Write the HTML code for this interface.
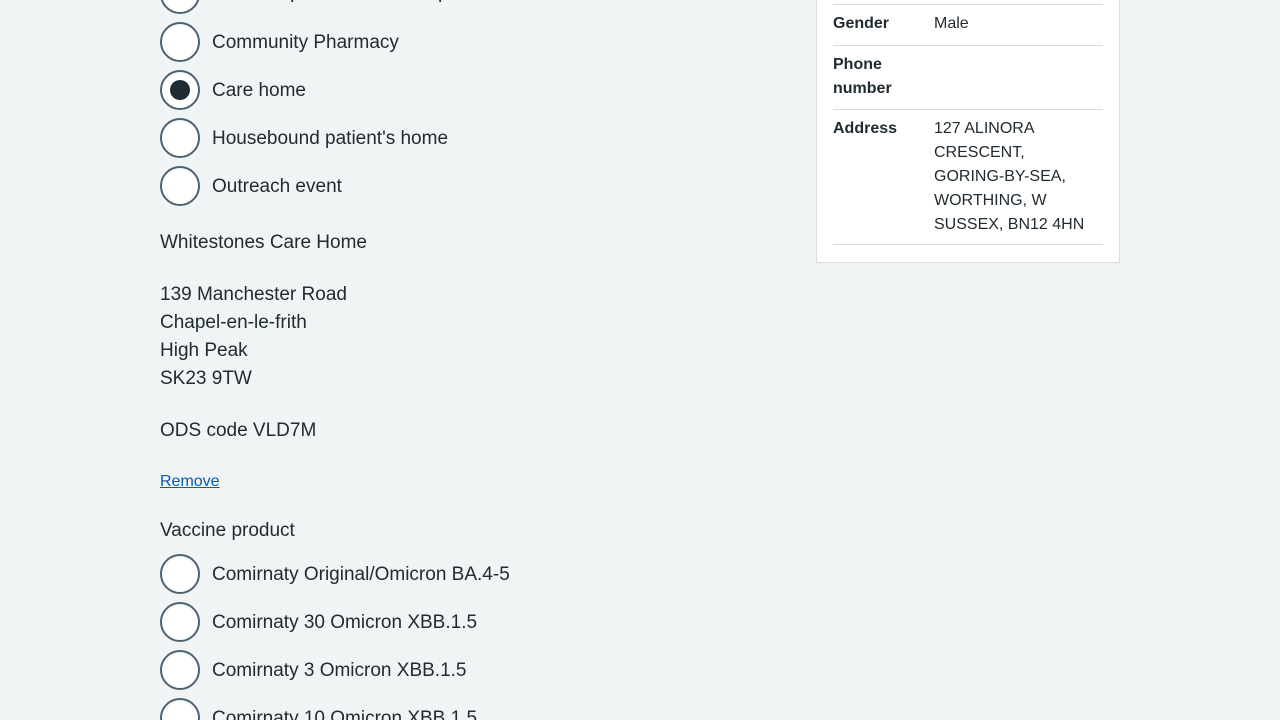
<!DOCTYPE html>
<html><head><style>
html,body{margin:0;width:1280px;height:720px;overflow:hidden}
body{background:#f0f4f5;font-family:"Liberation Sans",sans-serif;color:#212b32;position:relative}
.r{position:absolute;left:160px;width:36px;height:36px;border:2px solid #4c6272;border-radius:50%;background:#fff}
.r.on::after{content:"";position:absolute;left:8px;top:8px;width:20px;height:20px;border-radius:50%;background:#212b32}
.l{position:absolute;left:212px;font-size:19px;line-height:24px}
.t{position:absolute;left:160px;font-size:19px;line-height:28px}
a{color:#005eb8;font-size:16px}
.card{position:absolute;left:816px;top:-11px;width:302px;height:272px;background:#fff;border:1px solid #d8dde0}
.row{position:absolute;left:16px;width:270px;border-top:1px solid #d8dde0;font-size:16px;line-height:24px}
.k{position:absolute;left:0;font-weight:bold;top:7px}
.v{position:absolute;left:101px;top:7px;width:160px}
</style></head><body>
<div class="r" style="top:-26px"></div><div class="l" style="top:-19px">Home or place of work/hospital</div>
<div class="r" style="top:22px"></div><div class="l" style="top:31px">Community Pharmacy</div>
<div class="r on" style="top:70px"></div><div class="l" style="top:79px">Care home</div>
<div class="r" style="top:118px"></div><div class="l" style="top:127px">Housebound patient's home</div>
<div class="r" style="top:166px"></div><div class="l" style="top:175px">Outreach event</div>
<div class="t" style="top:229px">Whitestones Care Home</div>
<div class="t" style="top:281px">139 Manchester Road<br>Chapel-en-le-frith<br>High Peak<br>SK23 9TW</div>
<div class="t" style="top:417px">ODS code VLD7M</div>
<div class="t" style="top:469px;line-height:24px"><a href="#">Remove</a></div>
<div class="t" style="top:517px">Vaccine product</div>
<div class="r" style="top:554px"></div><div class="l" style="top:563px">Comirnaty Original/Omicron BA.4-5</div>
<div class="r" style="top:602px"></div><div class="l" style="top:611px">Comirnaty 30 Omicron XBB.1.5</div>
<div class="r" style="top:650px"></div><div class="l" style="top:659px">Comirnaty 3 Omicron XBB.1.5</div>
<div class="r" style="top:698px"></div><div class="l" style="top:707px">Comirnaty 10 Omicron XBB.1.5</div>
<div class="card">
<div class="row" style="top:14px;height:40px"><div class="k">Gender</div><div class="v">Male</div></div>
<div class="row" style="top:55px;height:63px"><div class="k">Phone<br>number</div></div>
<div class="row" style="top:119px;height:134px"><div class="k">Address</div><div class="v">127 ALINORA CRESCENT, GORING-BY-SEA, WORTHING, W SUSSEX, BN12 4HN</div></div>
<div class="row" style="top:254px;height:0"></div>
</div>
</body></html>
